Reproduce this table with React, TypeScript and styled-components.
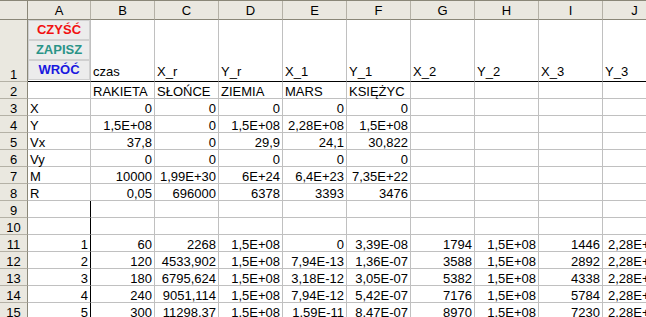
import styled, { createGlobalStyle } from "styled-components";

const GlobalStyle = createGlobalStyle`
  html, body {
    margin: 0;
    padding: 0;
    background: #ffffff;
    overflow: hidden;
  }
`;

const COLS = ["A", "B", "C", "D", "E", "F", "G", "H", "I", "J"];

// wiersze 2..15, kolumny A..J
const DATA: string[][] = [
  ["", "RAKIETA", "SŁOŃCE", "ZIEMIA", "MARS", "KSIĘŻYC"],
  ["X", "0", "0", "0", "0", "0"],
  ["Y", "1,5E+08", "0", "1,5E+08", "2,28E+08", "1,5E+08"],
  ["Vx", "37,8", "0", "29,9", "24,1", "30,822"],
  ["Vy", "0", "0", "0", "0", "0"],
  ["M", "10000", "1,99E+30", "6E+24", "6,4E+23", "7,35E+22"],
  ["R", "0,05", "696000", "6378", "3393", "3476"],
  [],
  [],
  ["1", "60", "2268", "1,5E+08", "0", "3,39E-08", "1794", "1,5E+08", "1446", "2,28E+08"],
  ["2", "120", "4533,902", "1,5E+08", "7,94E-13", "1,36E-07", "3588", "1,5E+08", "2892", "2,28E+08"],
  ["3", "180", "6795,624", "1,5E+08", "3,18E-12", "3,05E-07", "5382", "1,5E+08", "4338", "2,28E+08"],
  ["4", "240", "9051,114", "1,5E+08", "7,94E-12", "5,42E-07", "7176", "1,5E+08", "5784", "2,28E+08"],
  ["5", "300", "11298,37", "1,5E+08", "1,59E-11", "8,47E-07", "8970", "1,5E+08", "7230", "2,28E+08"],
];

const LABELS_ROW1 = ["czas", "X_r", "Y_r", "X_1", "Y_1", "X_2", "Y_2", "X_3", "Y_3"];

const isNum = (v: string) => /^\d[\d,E+\-]*$/.test(v);

const Sheet = styled.div`
  display: grid;
  grid-template-columns: 28px 63px repeat(9, 64px);
  grid-template-rows: 19px 62px repeat(14, 17px);
  width: 667px;
  font-family: "Liberation Sans", Arial, sans-serif;
  font-size: 13px;
  color: #000;
  border-top: 1px solid #8a8778;
  box-sizing: border-box;
`;

const Corner = styled.div`
  background: #eae8e0;
  border-right: 1px solid #8a8778;
  border-bottom: 1px solid #8a8778;
`;

const ColHeader = styled.div`
  background: #eae8e0;
  border-right: 1px solid #b4b1a6;
  border-bottom: 1px solid #8a8778;
  display: flex;
  align-items: center;
  justify-content: center;
  line-height: 17px;
`;

const RowHeader = styled.div`
  background: #eae8e0;
  border-right: 1px solid #8a8778;
  border-bottom: 1px solid #b4b1a6;
  display: flex;
  align-items: flex-end;
  justify-content: center;
  line-height: 13px;
`;

const Cell = styled.div<{ $num?: boolean; $darkBottom?: boolean; $darkRight?: boolean }>`
  border-right: 1px solid ${(p) => (p.$darkRight ? "#000" : "#c0c0c0")};
  border-bottom: 1px solid ${(p) => (p.$darkBottom ? "#000" : "#c0c0c0")};
  display: flex;
  align-items: flex-end;
  justify-content: ${(p) => (p.$num ? "flex-end" : "flex-start")};
  padding: 0 2px ${(p) => (p.$darkBottom ? "3px" : "0")};
  line-height: 13px;
  white-space: nowrap;
  min-width: 0;
`;

const ButtonCell = styled.div`
  border-right: 1px solid #c0c0c0;
  border-bottom: 1px solid #000;
  display: flex;
  flex-direction: column;
  padding: 0 0 1px 0;
`;

const SheetButton = styled.button<{ $color: string }>`
  flex: 1;
  margin: 0;
  padding: 0;
  background: #ececec;
  border: 1px solid;
  border-color: #ffffff #8e8e8e #8e8e8e #ffffff;
  outline: 1px solid #d0d0d0;
  outline-offset: -1px;
  font-family: "Liberation Sans", Arial, sans-serif;
  font-weight: bold;
  font-size: 13px;
  color: ${(p) => p.$color};
  line-height: 16px;
  cursor: pointer;
`;

export default function App() {
  return (
    <>
      <GlobalStyle />
      <Sheet>
        <Corner />
        {COLS.map((c) => (
          <ColHeader key={c}>{c}</ColHeader>
        ))}

        <RowHeader>1</RowHeader>
        <ButtonCell>
          <SheetButton $color="#f21010">CZYŚĆ</SheetButton>
          <SheetButton $color="#2a9488">ZAPISZ</SheetButton>
          <SheetButton $color="#1818e0">WRÓĆ</SheetButton>
        </ButtonCell>
        {LABELS_ROW1.map((h) => (
          <Cell key={h} $darkBottom>
            {h}
          </Cell>
        ))}

        {DATA.map((row, ri) => {
          const rowNo = ri + 2;
          return [
            <RowHeader key={`r-${rowNo}`}>{rowNo}</RowHeader>,
            ...COLS.map((c, ci) => {
              const v = row[ci] ?? "";
              return (
                <Cell key={`${c}${rowNo}`} $num={isNum(v)} $darkRight={ci === 0 && rowNo >= 9}>
                  {v}
                </Cell>
              );
            }),
          ];
        })}
      </Sheet>
    </>
  );
}
